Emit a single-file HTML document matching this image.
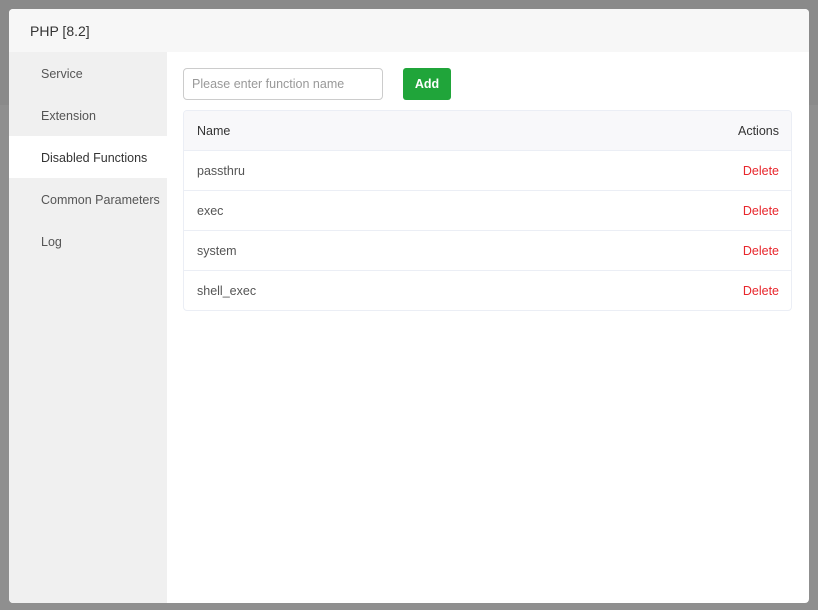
<!DOCTYPE html>
<html><head><meta charset="utf-8"><style>
*{box-sizing:border-box;margin:0;padding:0}
body{width:818px;height:610px;background:#8f8f8f;font-family:"Liberation Sans",sans-serif;font-size:13px;position:relative;overflow:hidden}
.topband{position:absolute;left:0;top:0;width:818px;height:105px;background:#8a8a8a}
.modal{position:absolute;left:9px;top:9px;width:800px;height:594px;background:#fff;border-radius:4px;overflow:hidden}
.hdr{height:43px;background:#f7f7f7;padding-left:21px;line-height:45px;font-size:14px;color:#333}
.side{position:absolute;left:0;top:43px;width:158px;bottom:0;background:#f0f0f0}
.side div{height:42px;line-height:44px;padding-left:32px;color:#555;font-size:12.5px;white-space:nowrap}
.side .on{background:#fff;color:#333}
.inp{position:absolute;left:174px;top:59px;width:200px;height:32px;border:1px solid #ccc;border-radius:4px;padding-left:8px;line-height:31px;color:#999;font-size:12.5px}
.btn{position:absolute;left:394px;top:59px;width:48px;height:32px;background:#20a53a;border-radius:3px;color:#fff;font-weight:bold;text-align:center;line-height:32px;font-size:12.5px}
.tbl{position:absolute;left:174px;top:101px;width:609px;height:201px;border:1px solid #ebeef5;border-radius:4px;overflow:hidden}
.row{height:40px;line-height:41px;border-bottom:1px solid #ebeef5;padding:0 12px 0 13px;display:flex;justify-content:space-between;color:#555;font-size:12.5px}
.row:last-child{border-bottom:none}
.th{background:#f8f8fa;color:#333}
.d{color:#e8262c}
</style></head><body>
<div class="topband"></div>
<div class="modal">
<div class="hdr">PHP [8.2]</div>
<div class="side"><div>Service</div><div>Extension</div><div class="on">Disabled Functions</div><div>Common Parameters</div><div>Log</div></div>
<div class="inp">Please enter function name</div>
<div class="btn">Add</div>
<div class="tbl">
<div class="row th"><span>Name</span><span>Actions</span></div>
<div class="row"><span>passthru</span><span class="d">Delete</span></div>
<div class="row"><span>exec</span><span class="d">Delete</span></div>
<div class="row"><span>system</span><span class="d">Delete</span></div>
<div class="row"><span>shell_exec</span><span class="d">Delete</span></div>
</div>
</div>
</body></html>
